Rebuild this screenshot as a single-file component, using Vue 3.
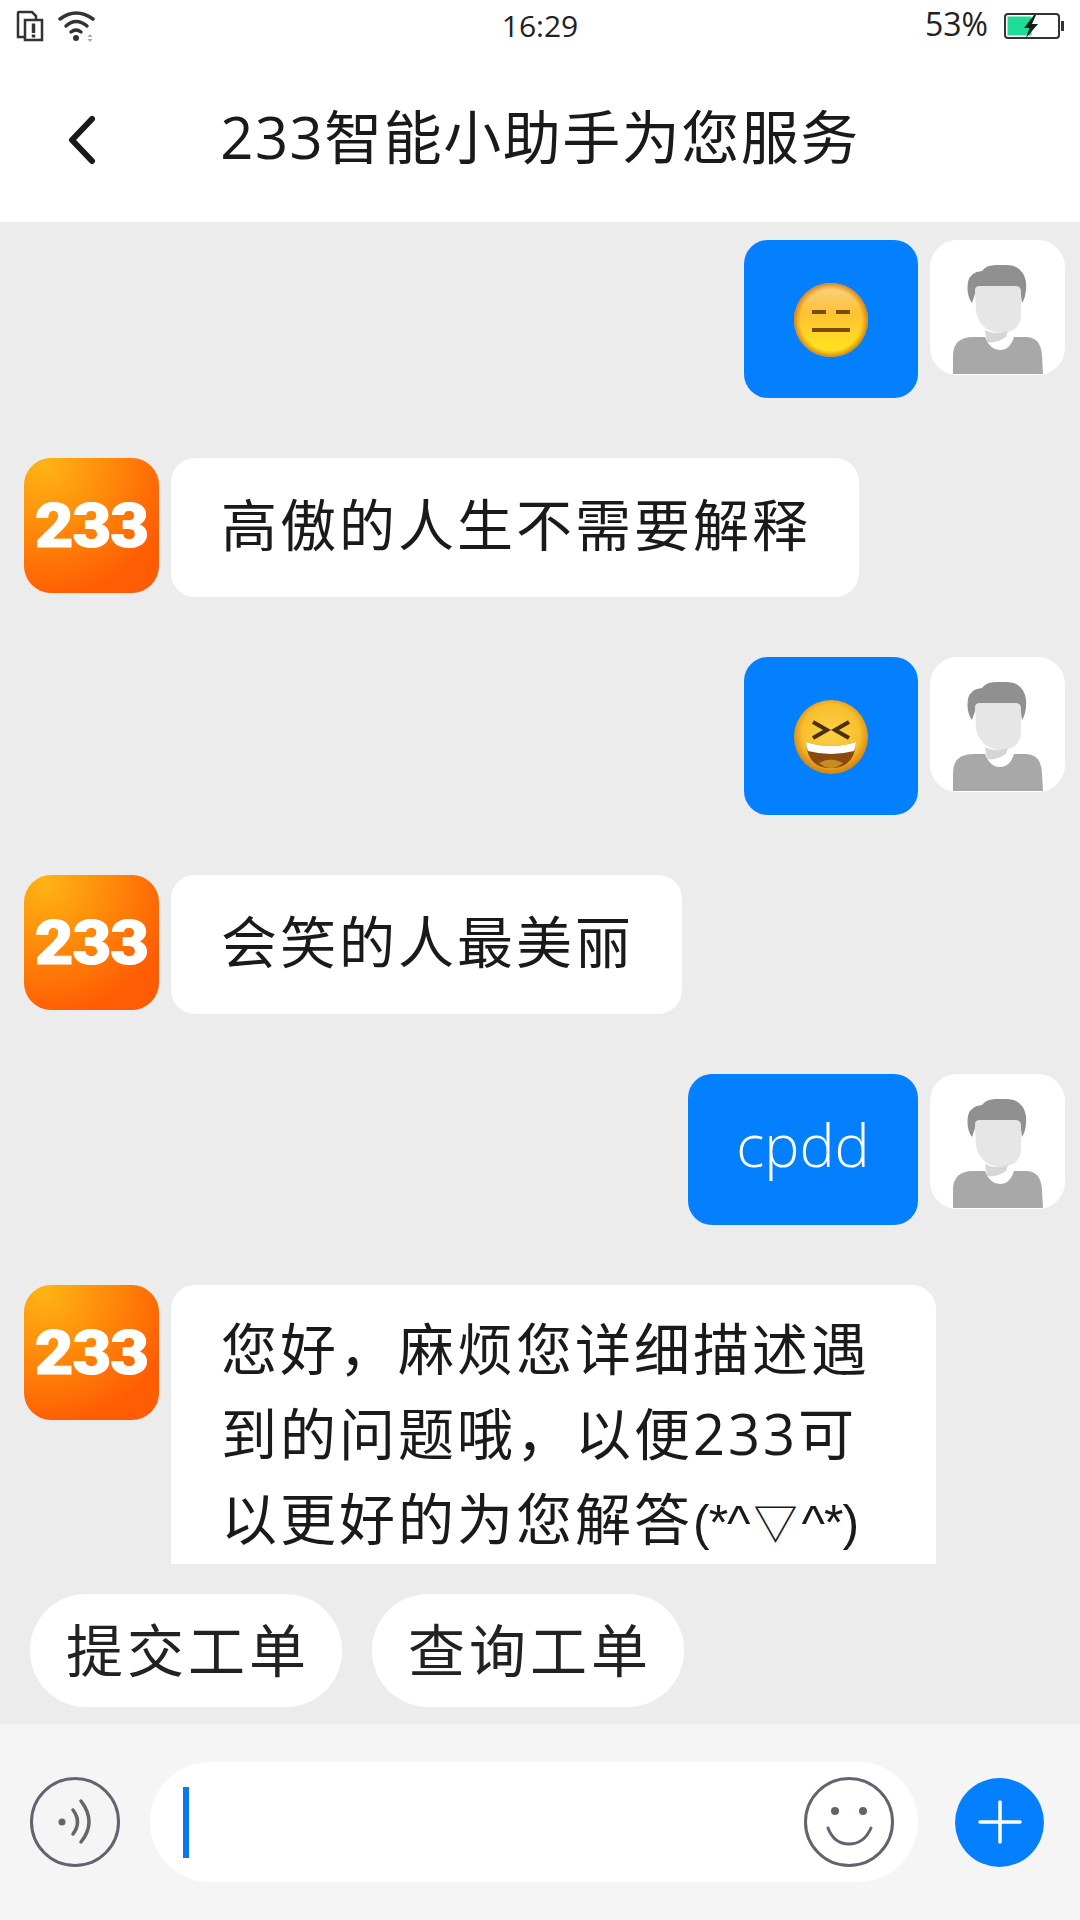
<script setup>
const avatarCount = 3
</script>

<template>
  <div class="page">
    <div class="status">
      <div class="status-left">
        <svg class="sim" width="28" height="32" viewBox="0 0 28 32" fill="none" stroke="#333" stroke-width="2.500">
          <path d="M8 27H2V3Q2 2 3 2H16L20 6V9" />
          <path d="M9 10H26V30H9Z" />
          <path d="M17.500 13.500V23" stroke-width="3.500" />
          <path d="M17.500 24.500V27.500" stroke-width="3.500" />
        </svg>
        <svg class="wifi" width="38" height="32" viewBox="0 0 38 32" fill="none" stroke="#333" stroke-width="3.500" stroke-linecap="round">
          <path d="M2 9Q18 -3 35 9" />
          <path d="M8 16Q18 7 29 16" />
          <path d="M13 22Q18 18 23 22" />
          <circle cx="18" cy="28" r="3" fill="#333" stroke="none" />
          <path d="M29.500 27L32 24L34.500 27ZM29.500 29L32 32L34.500 29Z" fill="#a8a8a8" stroke="none" />
        </svg>
      </div>
      <div class="time">16:29</div>
      <div class="status-right">
        <span class="pct">53%</span>
        <svg width="60" height="26" viewBox="0 0 60 26">
          <rect x="1" y="1" width="54" height="24" rx="3" fill="#fff" stroke="#333" stroke-width="2" />
          <rect x="3.500" y="3.500" width="24" height="19" fill="#1fdc9a" />
          <rect x="57" y="8" width="3" height="10" fill="#333" />
          <path d="M30 2L20 15H25.500L22 25L34 11H28L32 2Z" fill="#12201b" />
        </svg>
      </div>
    </div>

    <header class="nav">
      <svg class="back" width="32" height="50" viewBox="0 0 32 50" fill="none" stroke="#1a1a1a" stroke-width="6" stroke-linecap="round" stroke-linejoin="round">
        <path d="M26 4L6 25L26 46" />
      </svg>
      <h1 class="title">233智能小助手为您服务</h1>
    </header>

    <main class="chat">
      <div class="row mine">
        <div class="bubble blue emoji-bubble">
          <svg width="76" height="76" viewBox="0 0 76 76">
            <defs>
              <linearGradient id="faceA" x1="0" y1="0" x2="0" y2="1">
                <stop offset="0" stop-color="#fad38c" />
                <stop offset="0.4" stop-color="#fcc133" />
                <stop offset="0.85" stop-color="#ffe020" />
              </linearGradient>
              <radialGradient id="edgeA" cx="50%" cy="50%" r="50%">
                <stop offset="0.82" stop-color="#e08a12" stop-opacity="0" />
                <stop offset="1" stop-color="#d07a10" stop-opacity="0.9" />
              </radialGradient>
            </defs>
            <circle cx="38" cy="38" r="37" fill="url(#faceA)" />
            <circle cx="38" cy="38" r="37" fill="url(#edgeA)" />
            <path d="M19 30H33M43 30H57M19 48H57" stroke="#7a4a08" stroke-width="4" fill="none" />
          </svg>
        </div>
        <div class="avatar user">
          <svg width="135" height="135" viewBox="0 0 135 135">
            <path d="M23 134V116Q23 97 43 97H55Q60 110 70 110Q80 110 84 97H96Q111 97 112 116L113 134Z" fill="#a8a8a8" />
            <path d="M42 63Q36 55 38 42Q40 32 52 31Q56 25 66 25H76Q93 25 96 42Q97 55 92 63L90 48H47Z" fill="#909090" />
            <path d="M45 50Q45 46 50 46H86Q91 46 91 52V75Q91 88 78 92Q72 94 68 93Q50 90 46 72Z" fill="#e6e6e6" />
            <path d="M55 90Q65 96 78 91L76 97Q66 104 57 102Z" fill="#d6d6d6" />
          </svg>
        </div>
      </div>

      <div class="row">
        <div class="avatar logo"><span>233</span></div>
        <div class="bubble white">高傲的人生不需要解释</div>
      </div>

      <div class="row mine">
        <div class="bubble blue emoji-bubble">
          <svg width="76" height="76" viewBox="0 0 76 76">
            <defs>
              <radialGradient id="faceB" cx="50%" cy="45%" r="52%">
                <stop offset="0" stop-color="#fbd146" />
                <stop offset="0.75" stop-color="#f8bf2c" />
                <stop offset="1" stop-color="#d98a12" />
              </radialGradient>
            </defs>
            <circle cx="38" cy="38" r="37" fill="url(#faceB)" />
            <path d="M20 23L34 31L20 39M56 23L42 31L56 39" fill="none" stroke="#4a2f10" stroke-width="4" />
            <path d="M13 43Q38 51 63 43Q62 69 38 69Q14 69 13 43Z" fill="#8a4a10" />
            <path d="M13 43Q38 51 63 43Q63 48 61 52Q38 58 15 52Q13 48 13 43Z" fill="#fff" />
            <path d="M26 64Q38 57 50 64Q44 69 38 69Q32 69 26 64Z" fill="#c98b24" />
          </svg>
        </div>
        <div class="avatar user">
          <svg width="135" height="135" viewBox="0 0 135 135">
            <path d="M23 134V116Q23 97 43 97H55Q60 110 70 110Q80 110 84 97H96Q111 97 112 116L113 134Z" fill="#a8a8a8" />
            <path d="M42 63Q36 55 38 42Q40 32 52 31Q56 25 66 25H76Q93 25 96 42Q97 55 92 63L90 48H47Z" fill="#909090" />
            <path d="M45 50Q45 46 50 46H86Q91 46 91 52V75Q91 88 78 92Q72 94 68 93Q50 90 46 72Z" fill="#e6e6e6" />
            <path d="M55 90Q65 96 78 91L76 97Q66 104 57 102Z" fill="#d6d6d6" />
          </svg>
        </div>
      </div>

      <div class="row">
        <div class="avatar logo"><span>233</span></div>
        <div class="bubble white">会笑的人最美丽</div>
      </div>

      <div class="row mine">
        <div class="bubble blue text-blue">cpdd</div>
        <div class="avatar user">
          <svg width="135" height="135" viewBox="0 0 135 135">
            <path d="M23 134V116Q23 97 43 97H55Q60 110 70 110Q80 110 84 97H96Q111 97 112 116L113 134Z" fill="#a8a8a8" />
            <path d="M42 63Q36 55 38 42Q40 32 52 31Q56 25 66 25H76Q93 25 96 42Q97 55 92 63L90 48H47Z" fill="#909090" />
            <path d="M45 50Q45 46 50 46H86Q91 46 91 52V75Q91 88 78 92Q72 94 68 93Q50 90 46 72Z" fill="#e6e6e6" />
            <path d="M55 90Q65 96 78 91L76 97Q66 104 57 102Z" fill="#d6d6d6" />
          </svg>
        </div>
      </div>

      <div class="row">
        <div class="avatar logo"><span>233</span></div>
        <div class="bubble white long">您好，麻烦您详细描述遇到的问题哦，以便233可以更好的为您解答<span class="kao">(*^<span class="tri">▽</span>^*)</span></div>
      </div>
    </main>

    <div class="quick">
      <div class="chip">提交工单</div>
      <div class="chip">查询工单</div>
    </div>

    <footer class="bar">
      <svg class="ico" width="90" height="90" viewBox="0 0 90 90" fill="none" stroke="#62636e" stroke-linecap="round">
        <circle cx="45" cy="45" r="43.500" stroke-width="3" />
        <circle cx="32" cy="45" r="3.500" fill="#666" stroke="none" />
        <path d="M43 33Q52 45 43 57" stroke="#666" stroke-width="3.500" />
        <path d="M51 24Q67 45 51 65" stroke="#666" stroke-width="3.500" />
      </svg>
      <div class="input">
        <span class="caret"></span>
        <svg class="ico" width="90" height="90" viewBox="0 0 90 90" fill="none" stroke="#62636e" stroke-linecap="round">
          <circle cx="45" cy="45" r="43.500" stroke-width="3" />
          <circle cx="31" cy="34" r="4" fill="#62636e" stroke="none" />
          <circle cx="59" cy="34" r="4" fill="#62636e" stroke="none" />
          <path d="M24 51Q30 67 45 67Q60 67 67 51" stroke-width="3" />
        </svg>
      </div>
      <div class="plus">
        <svg width="44" height="44" viewBox="0 0 44 44" stroke="#fff" stroke-width="3.500" stroke-linecap="round">
          <path d="M22 2V42M2 22H42" />
        </svg>
      </div>
    </footer>
  </div>
</template>

<style>
html, body { margin: 0; padding: 0; background: #ececec; }
</style>

<style scoped>
.page {
  width: 1080px;
  height: 1920px;
  display: flex;
  flex-direction: column;
  overflow: hidden;
  background: #ececec;
  color: #1a1a1a;
  font-family: "Open Sans", "Noto Sans CJK SC", sans-serif;
}
.status {
  height: 52px;
  flex: none;
  background: #fff;
  display: grid;
  grid-template-columns: 1fr auto 1fr;
  align-items: center;
  padding: 0 16px;
  box-sizing: border-box;
  color: #222;
}
.status-left { display: flex; align-items: center; gap: 14px; }
.status-right { display: flex; align-items: center; justify-content: flex-end; gap: 16px; }
.time { font-size: 30px; line-height: 52px; }
.pct { font-size: 32px; line-height: 52px; margin-top: -4px; }
.nav {
  height: 170px;
  flex: none;
  background: #fff;
  display: flex;
  align-items: center;
  justify-content: center;
  position: relative;
}
.back { position: absolute; left: 66px; top: 63px; }
.title {
  margin: 0 0 6px;
  font-size: 58px;
  font-weight: 400;
  letter-spacing: 1.500px;
}
.chat {
  height: 1342px;
  flex: none;
  box-sizing: border-box;
  overflow: hidden;
  padding: 18px 15px 0 24px;
  display: flex;
  flex-direction: column;
  gap: 60px;
}
.row { display: flex; gap: 12px; align-items: flex-start; flex: none; }
.row.mine { justify-content: flex-end; }
.avatar {
  width: 135px;
  height: 135px;
  border-radius: 27px;
  flex: none;
  overflow: hidden;
}
.user { background: #fff; }
.user svg { display: block; }
.logo {
  background: radial-gradient(circle at 15% 5%, #ffb414 0%, #ff8a0a 38%, #ff5c03 78%);
  display: flex;
  align-items: center;
  justify-content: center;
  color: #fff;
  font-family: Roboto, sans-serif;
  font-weight: 900;
  font-size: 62px;
  line-height: 1;
  letter-spacing: -1px;
  -webkit-text-stroke: 1px #fff;
}
.logo span { transform: scaleX(1.08); }
.bubble {
  box-sizing: border-box;
  border-radius: 24px;
  font-size: 56px;
}
.white {
  background: #fff;
  padding: 27px 48px 33px 50px;
  line-height: 79px;
  letter-spacing: 3px;
  color: #1a1a1a;
}
.long {
  width: 765px;
  padding: 21px 48px 60px 50px;
  line-height: 85px;
}
.kao {
  font-family: "Liberation Sans", "Noto Sans CJK SC", sans-serif;
  font-size: 50px;
  letter-spacing: -1px;
  white-space: nowrap;
}
.tri {
  font-family: "Noto Sans CJK SC", sans-serif;
  font-size: 44px;
  letter-spacing: 0;
  margin: 0 4px;
}
.blue { background: #0480ff; }
.emoji-bubble {
  width: 174px;
  height: 158px;
  display: flex;
  align-items: center;
  justify-content: center;
  padding-top: 2px;
}
.text-blue {
  color: #fff;
  width: 230px;
  height: 151px;
  display: flex;
  align-items: center;
  justify-content: center;
  font-size: 59px;
  font-weight: 300;
  padding-bottom: 12px;
}
.quick {
  height: 160px;
  flex: none;
  box-sizing: border-box;
  padding: 30px 0 0 30px;
  display: flex;
  gap: 30px;
  align-items: flex-start;
}
.chip {
  width: 312px;
  height: 113px;
  border-radius: 56px;
  background: #fff;
  display: flex;
  align-items: center;
  justify-content: center;
  font-size: 57px;
  letter-spacing: 4px;
  color: #222;
  padding: 0 0 6px 4px;
  box-sizing: border-box;
}
.bar {
  flex: 1;
  background: #f5f5f5;
  display: flex;
  align-items: center;
  padding: 0 36px 0 30px;
  box-sizing: border-box;
}
.ico { flex: none; display: block; }
.input {
  width: 768px;
  height: 120px;
  margin: 0 37px 0 30px;
  border-radius: 60px;
  background: #fff;
  display: flex;
  align-items: center;
  justify-content: space-between;
  padding: 0 24px 0 33px;
  box-sizing: border-box;
}
.caret { width: 6px; height: 71px; background: #0a78f0; }
.plus {
  width: 89px;
  height: 89px;
  flex: none;
  border-radius: 50%;
  background: #0480ff;
  display: flex;
  align-items: center;
  justify-content: center;
}
</style>
